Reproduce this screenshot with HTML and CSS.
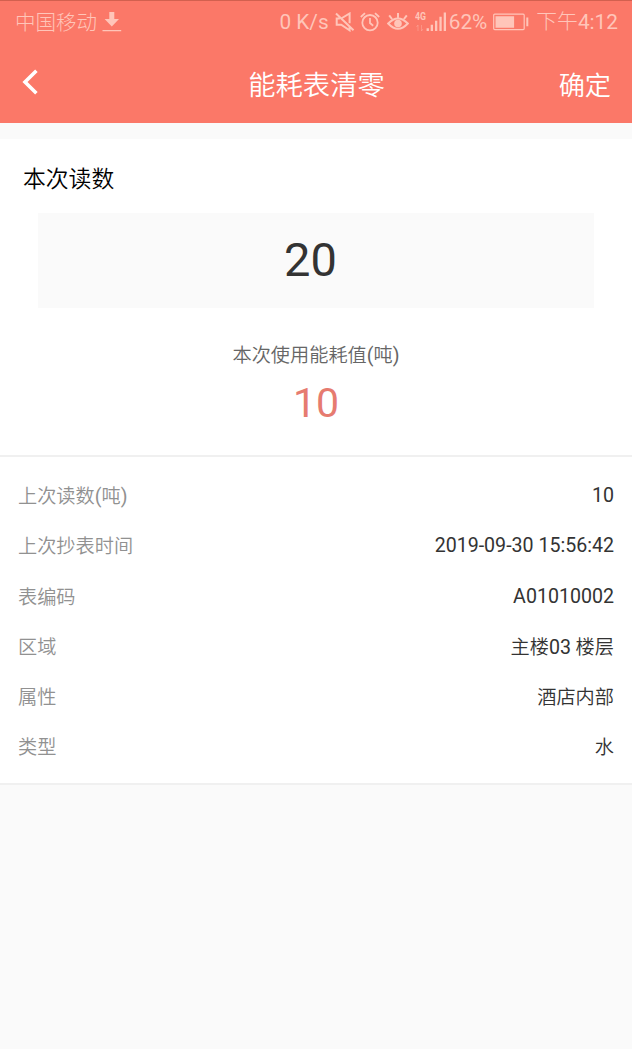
FILE: index.html
```html
<!DOCTYPE html>
<html lang="zh-CN">
<head>
<meta charset="utf-8">
<title>能耗表清零</title>
<link rel="stylesheet" href="styles.css">
</head>
<body>
<header class="top">
  <div class="status">
    <span class="carrier">中国移动</span>
    <svg class="download" width="20" height="22" viewBox="0 0 20 22"><path fill="currentColor" d="M7.3 1h5v7H17l-7.2 7.5L2.6 8h4.7zM.5 19h18.7v1.2H.5z"/></svg>
    <span class="speed">0 K/s</span>
    <svg class="mute" width="20" height="20" viewBox="0 0 20 20" fill="none" stroke="currentColor" stroke-width="2"><path d="M7 6 14.6 1.5v9.7M4.8 6.5H1.7v6.2h4.5l8.4 5.6v-3.6M1 1.5l17.5 16.8"/></svg>
    <svg class="alarm" width="20" height="20" viewBox="0 0 20 20" fill="none" stroke="currentColor" stroke-width="1.8"><circle cx="10" cy="10.7" r="7.7"/><path d="M10 6v5l3.2 2.7M.8 5 5 1.2M19.2 5 15 1.2"/></svg>
    <svg class="eye" width="22" height="20" viewBox="0 0 22 20" fill="none" stroke="currentColor" stroke-width="2"><path d="M1.2 11.5Q11 1.5 20.8 11.5 11 22 1.2 11.5zM11 5.5V1M5 7 2.2 3.3M17 7l2.8-3.7"/><circle cx="11" cy="11.5" r="3.8" fill="currentColor" stroke="none"/></svg>
    <svg class="signal" width="33" height="22" viewBox="0 0 33 22"><text class="net" x="0" y="9" textLength="11" lengthAdjust="spacingAndGlyphs">4G</text><path fill="currentColor" d="M11.6 17.3h2.3V20h-2.3zM15.7 13.8H18V20h-2.3zM20 9.7h2.3V20H20zM24.4 5.8h2.3V20h-2.3zM28.7 1.5H31V20h-2.3z"/><path fill="none" stroke="currentColor" stroke-opacity=".35" d="M3 20v-6l-1.5 2M6.5 14v6L8 18"/></svg>
    <span class="percent">62%</span>
    <svg class="battery" width="36" height="18" viewBox="0 0 36 18"><rect x=".7" y="1.2" width="30.5" height="15.4" rx="1" fill="none" stroke="currentColor" stroke-width="1.2"/><path fill="currentColor" d="M2.5 3.2h18.6v11.6H2.5zM33.3 4.5h2v8.8h-2z"/></svg>
    <span class="clock">下午4:12</span>
  </div>
  <nav class="bar">
    <svg class="back" width="18" height="28" viewBox="0 0 18 28"><path d="M14.4 2.8 3 14l11.4 11.2" fill="none" stroke="currentColor" stroke-width="3.6"/></svg>
    <h1 class="title">能耗表清零</h1>
    <span class="confirm">确定</span>
  </nav>
</header>
<main class="sheet">
  <section class="reading">
    <h2 class="heading">本次读数</h2>
    <div class="field">20</div>
    <p class="usage-label">本次使用能耗值<span class="latin">(</span>吨<span class="latin">)</span></p>
    <p class="usage">10</p>
  </section>
  <dl class="details">
    <div class="row"><dt>上次读数<span class="latin">(</span>吨<span class="latin">)</span></dt><dd class="number">10</dd></div>
    <div class="row"><dt>上次抄表时间</dt><dd class="number">2019-09-30 15:56:42</dd></div>
    <div class="row"><dt>表编码</dt><dd class="number">A01010002</dd></div>
    <div class="row"><dt>区域</dt><dd>主楼<span class="latin">03</span> 楼层</dd></div>
    <div class="row"><dt>属性</dt><dd>酒店内部</dd></div>
    <div class="row"><dt>类型</dt><dd>水</dd></div>
  </dl>
</main>
</body>
</html>
```

FILE: styles.css
```css
* { box-sizing: border-box; margin: 0; padding: 0; }
body {
  min-height: 1049px;
  background: #fafafa;
  color: #333;
  font-family: Roboto, "Noto Sans CJK SC", sans-serif;
}
svg { display: block; flex: none; }
.top {
  height: 123px;
  background: #fb7868;
  border-top: 1px solid #d2604f;
  color: #fff;
}
.status {
  display: flex;
  align-items: center;
  height: 42px;
  padding: 0 14px 0 15px;
  color: #ffc5b9;
  font-family: Roboto, "Noto Sans CJK SC Light", "Noto Sans CJK SC", sans-serif;
  font-size: 20.8px;
  line-height: 42px;
  white-space: nowrap;
}
.carrier { padding-top: 2px; font-size: 20.5px; font-weight: 350; }
.download { margin-left: 5px; }
.speed { margin-left: auto; }
.mute { margin-left: 6px; }
.alarm { margin-left: 5px; }
.eye { margin-left: 7px; }
.signal { margin-left: 6px; }
.net { fill: currentColor; font: 700 11px Roboto, sans-serif; }
.percent { margin-left: 1px; }
.battery { margin-left: 6px; }
.clock { margin-left: 7px; }
.bar {
  display: grid;
  grid-template-columns: 1fr auto 1fr;
  align-items: center;
  height: 80px;
  padding: 0 21px 0 22px;
}
.back { margin-top: -2px; }
.title { padding-top: 5px; font-size: 27.3px; font-weight: 350; line-height: 40px; }
.confirm { justify-self: end; padding-top: 5px; font-size: 26.2px; font-weight: 350; line-height: 40px; }
.sheet {
  margin-top: 16px;
  background: #fff;
  border-bottom: 2px solid #f0f0f0;
}
.reading {
  height: 318px;
  padding: 25px 38px 0;
  border-bottom: 2px solid #f0f0f0;
  text-align: center;
}
.heading {
  margin-left: -15px;
  color: #000;
  font-size: 22.8px;
  font-weight: 350;
  line-height: 32px;
  text-align: left;
}
.field {
  height: 95px;
  margin-top: 17px;
  padding-right: 11px;
  background: #fafafa;
  font-size: 47px;
  line-height: 94px;
}
.usage-label {
  margin-top: 33px;
  color: #666;
  font-size: 19.2px;
  font-weight: 350;
  line-height: 30px;
}
.usage {
  margin-top: 7px;
  color: #e67b70;
  font-size: 41px;
  line-height: 50px;
}
.details { height: 326px; padding: 15px 18px 0; }
.row {
  display: flex;
  justify-content: space-between;
  height: 50.3px;
  font-size: 19.2px;
  font-weight: 350;
  line-height: 50px;
}
.row dt { color: #919191; }
.row .number { margin-top: -1px; font-size: 19.6px; font-weight: 400; }
.latin { font-size: 19.6px; font-weight: 400; }
```
